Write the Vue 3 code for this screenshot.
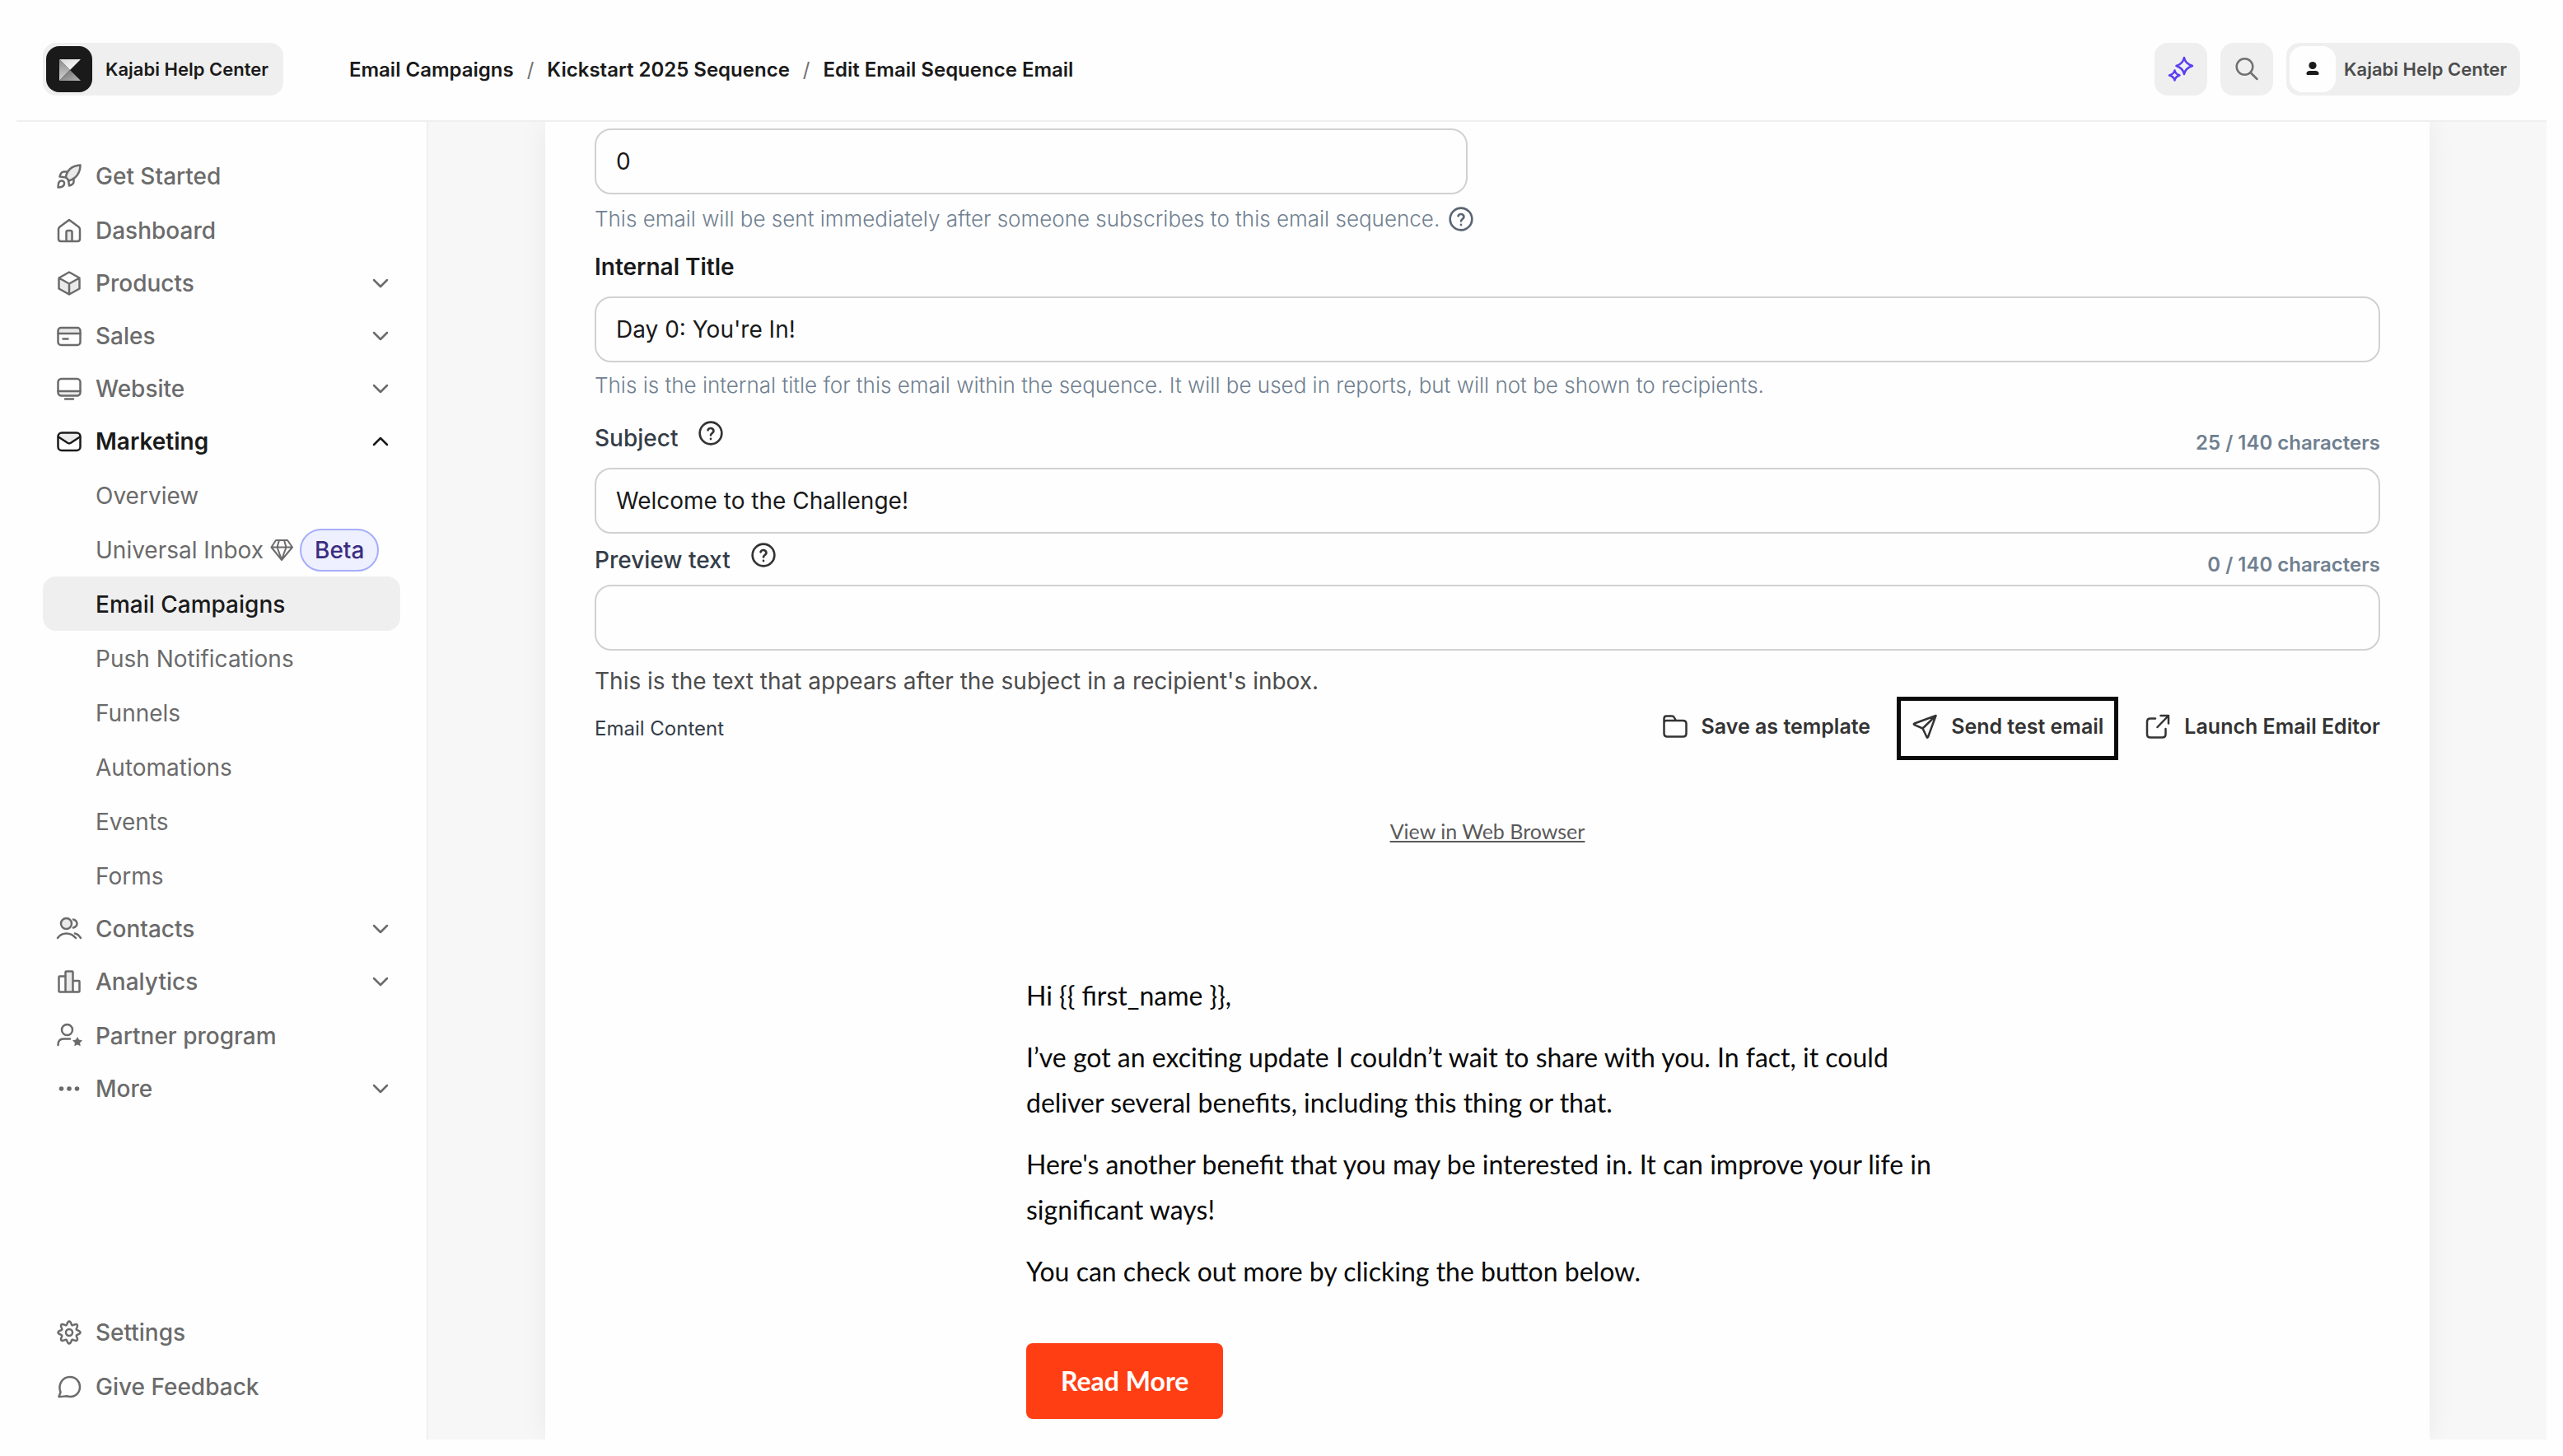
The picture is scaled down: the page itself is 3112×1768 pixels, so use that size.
<template>
  <div class="page">
    <svg class="sprite" aria-hidden="true">
      <symbol id="i-rocket" viewBox="0 0 32 32">
        <path class="tint" d="M12 17C13 9 19 3 29.500 2.500C29.500 12 24 19 15.500 21.500Z" />
        <path d="M12 17C13 9 19 3 29.500 2.500C29.500 12 24 19 15.500 21.500Z" />
        <path d="M13 10.500H9.500C7 10.500 5.500 12.500 4.500 16.500L12 17.500M21.500 18.500V22.500C21.500 25 19.500 26.500 16 27.500L15 20.500" />
        <path d="M2.500 29.500C2.500 25 3.500 21.500 6.500 21.500C9 21.500 10.500 23 10 25.500C9.500 28.500 6.500 29.500 2.500 29.500Z" />
      </symbol>
      <symbol id="i-home" viewBox="0 0 32 32">
        <path class="tint" d="M12.500 29V18C12.500 16.500 13 16 14.500 16H17.500C19 16 19.500 16.500 19.500 18V29Z" />
        <path d="M16 3L27.500 11.500C28.500 12.500 29 13.500 29 14.500V26C29 28 28 29 26 29H6C4 29 3 28 3 26V14.500C3 13.500 3.500 12.500 4.500 11.500ZM12.500 29V18C12.500 16.500 13 16 14.500 16H17.500C19 16 19.500 16.500 19.500 18V29" />
      </symbol>
      <symbol id="i-cube" viewBox="0 0 32 32">
        <path class="tint" d="M3.500 9.500L16 16.500L28.500 9.500V22.500L16 30L3.500 22.500Z" />
        <path d="M16 2.500L28.500 9.500V22.500L16 29.500L3.500 22.500V9.500ZM3.500 9.500L16 16.500L28.500 9.500M16 16.500V29.500" />
      </symbol>
      <symbol id="i-card" viewBox="0 0 32 32">
        <path class="tint" d="M2.500 13V9Q2.500 6 5.500 6H26.500Q29.500 6 29.500 9V13Z" />
        <rect x="2.500" y="6" width="27" height="21" rx="3.500" />
        <path d="M2.500 13H29.500M8.500 19.500H14.500" />
      </symbol>
      <symbol id="i-screen" viewBox="0 0 32 32">
        <path class="tint" d="M2.500 19H29.500V21Q29.500 24.500 26 24.500H6Q2.500 24.500 2.500 21Z" />
        <rect x="2.500" y="4" width="27" height="20.500" rx="4" />
        <path d="M2.500 19H29.500M11 28.500H21" />
      </symbol>
      <symbol id="i-mail" viewBox="0 0 32 32">
        <path class="tint" d="M2.500 10Q3 5.500 7 5.500H25Q29 5.500 29.500 10L18 18Q16 19 14 18Z" />
        <rect x="2.500" y="5.500" width="27" height="21.500" rx="4.500" />
        <path d="M3 10.500L14 17.800Q16 19 18 17.800L29 10.500" />
      </symbol>
      <symbol id="i-people" viewBox="0 0 32 32">
        <circle class="tint" cx="12.500" cy="9.500" r="6.500" />
        <circle cx="12.500" cy="9.500" r="6.500" />
        <path d="M21 4.500C24 5.500 25.500 7.500 25.500 9.500S24 13.500 21 14.500M2 27C7 19.500 18 19.500 24 27M23 21.500C26 22 28 24 30 27" />
      </symbol>
      <symbol id="i-bars" viewBox="0 0 32 32">
        <rect class="tint" x="11.500" y="3.500" width="9" height="25" />
        <path d="M3.500 27.500V10.500Q3.500 9.500 4.500 9.500H11.500V4.500Q11.500 3.500 12.500 3.500H19.500Q20.500 3.500 20.500 4.500V15H27.500Q28.500 15 28.500 16V27.500Q28.500 28.500 27.500 28.500H4.500Q3.500 28.500 3.500 27.500ZM11.500 9.500V28.500M20.500 15V28.500" />
      </symbol>
      <symbol id="i-partner" viewBox="0 0 32 32">
        <circle cx="13.500" cy="8.500" r="6.500" />
        <path d="M2.500 27C2.500 22 5 19.500 9 19.500H17" />
        <path class="solid" d="M26 17L27.900 20.600L32 21.300L29.100 24.200L29.700 28.200L26 26.400L22.300 28.200L22.900 24.200L20 21.300L24.100 20.600Z" />
      </symbol>
      <symbol id="i-dots" viewBox="0 0 32 32">
        <circle class="solid" cx="6.500" cy="16" r="2.800" />
        <circle class="solid" cx="16" cy="16" r="2.800" />
        <circle class="solid" cx="25.500" cy="16" r="2.800" />
      </symbol>
      <symbol id="i-gear" viewBox="0 0 32 32">
        <path :d="gearPath" />
        <circle cx="16" cy="16" r="4" />
      </symbol>
      <symbol id="i-bubble" viewBox="0 0 32 32">
        <path d="M3.500 28L5.500 22.500C2 13 8 4 17 4C24 4 29 9.500 29 16C29 24 22 30 13 27.200C10 27.200 7 28.500 3.500 28Z" />
      </symbol>
      <symbol id="i-chevron" viewBox="0 0 24 24">
        <path d="M4 8L12 16L20 8" />
      </symbol>
      <symbol id="i-gem" viewBox="0 0 28 28">
        <path d="M7 2H21L27 10.500L14 26L1.500 10.500ZM1.500 10.500H27M8.500 10.500L14 25.500L19.500 10.500L17 2M8.500 10.500L11 2" />
      </symbol>
      <symbol id="i-help" viewBox="0 0 24 24">
        <circle cx="12" cy="12" r="10" />
        <path d="M9.400 9.200a2.700 2.700 0 0 1 5.200 .8c0 1.900-2.600 2.100-2.600 3.900M12 17.200v.1" />
      </symbol>
      <symbol id="i-sparkle" viewBox="0 0 32 32">
        <path d="M20 2Q21.500 9.500 30 12Q21.500 14.500 20 22Q18.500 14.500 10.500 12Q18.500 9.500 20 2ZM8.500 17.500Q9.500 22 14.500 23.500Q9.500 25 8.500 29.500Q7.500 25 2 23.500Q7.500 22 8.500 17.500Z" />
      </symbol>
      <symbol id="i-search" viewBox="0 0 32 32">
        <circle cx="13.500" cy="13" r="9.800" />
        <path d="M20.500 20L28.500 28" />
      </symbol>
      <symbol id="i-user" viewBox="0 0 32 32">
        <circle class="solid" cx="16" cy="11.500" r="4.600" />
        <path class="solid" d="M8.500 21.500Q8.500 18 12.500 18H19.500Q23.500 18 23.500 21.500Q23.500 23 22 23H10Q8.500 23 8.500 21.500Z" />
      </symbol>
      <symbol id="i-folder" viewBox="0 0 32 32">
        <path d="M2.500 11.500V6.500Q2.500 3.500 5.500 3.500H12Q14 3.500 15 5.500L17 9H25.500Q29.500 9 29.500 13V24.500Q29.500 28.500 25.500 28.500H6.500Q2.500 28.500 2.500 24.500V11.500Q2.500 9 5.500 9H17" />
      </symbol>
      <symbol id="i-plane" viewBox="0 0 32 32">
        <path d="M29.500 3L3.500 12.500Q2 13.300 3.500 14.200L13.500 18.500L18.500 29Q19.300 30.300 20 29ZM13.500 18.500L29.500 3" />
      </symbol>
      <symbol id="i-launch" viewBox="0 0 32 32">
        <path d="M13 6.500H7Q3 6.500 3 10.500V25.500Q3 29.500 7 29.500H21.500Q25.500 29.500 25.500 25.500V19M19.500 3H29V12.500M28.500 3.500L15.500 17" />
      </symbol>
    </svg>

    <header class="topbar">
      <a href="#" class="brand">
        <svg class="logo" viewBox="0 0 56 56" aria-hidden="true">
          <defs>
            <linearGradient id="g-top" x1="0" y1="0" x2="1" y2="1">
              <stop offset="0" stop-color="#d8d8d8" />
              <stop offset="1" stop-color="#ffffff" />
            </linearGradient>
            <linearGradient id="g-left" x1="0" y1="0" x2="0" y2="1">
              <stop offset="0" stop-color="#8a8a8a" />
              <stop offset="1" stop-color="#d4d4d4" />
            </linearGradient>
            <linearGradient id="g-bottom" x1="0" y1="0" x2="1" y2="1">
              <stop offset="0" stop-color="#6c6c6c" />
              <stop offset="1" stop-color="#b4b4b4" />
            </linearGradient>
          </defs>
          <rect width="56" height="56" rx="16" fill="#1a1a1a" />
          <path fill="url(#g-top)" d="M16 16H42L29 29Z" />
          <path fill="url(#g-left)" d="M16 16L29 29L16 42Z" />
          <path fill="url(#g-bottom)" d="M29 29L42 42H16Z" />
        </svg>
        Kajabi Help Center
      </a>

      <nav class="crumbs" aria-label="Breadcrumb">
        <template v-for="(crumb, i) in crumbs" :key="crumb">
          <span v-if="i" class="slash">/</span>
          <a href="#">{{ crumb }}</a>
        </template>
      </nav>

      <div class="tools">
        <button type="button" class="tool accent" aria-label="Assistant">
          <svg class="icon"><use href="#i-sparkle" /></svg>
        </button>
        <button type="button" class="tool" aria-label="Search">
          <svg class="icon"><use href="#i-search" /></svg>
        </button>
        <button type="button" class="account">
          <span class="avatar"><svg class="icon"><use href="#i-user" /></svg></span>
          Kajabi Help Center
        </button>
      </div>
    </header>

    <div class="body">
      <nav class="sidebar" aria-label="Main">
        <template v-for="item in menu" :key="item.label">
          <button
            v-if="item.group"
            type="button"
            class="item group"
            :class="{ open: item.children }"
            :aria-expanded="!!item.children"
          >
            <svg class="icon"><use :href="'#i-' + item.icon" /></svg>
            {{ item.label }}
            <svg class="chevron"><use href="#i-chevron" /></svg>
          </button>
          <a v-else href="#" class="item" :class="{ first: item.first }">
            <svg class="icon"><use :href="'#i-' + item.icon" /></svg>
            {{ item.label }}
          </a>
          <a
            v-for="child in item.children"
            :key="child.label"
            href="#"
            class="item child"
            :class="{ active: child.label === activePage }"
          >
            {{ child.label }}
            <template v-if="child.beta">
              <svg class="gem"><use href="#i-gem" /></svg>
              <span class="beta">Beta</span>
            </template>
          </a>
        </template>
      </nav>

      <main class="content">
        <form class="card" @submit.prevent>
          <input v-model="form.delay" class="field half" type="text" aria-label="Days after subscription">
          <p class="help delay-help">
            This email will be sent immediately after someone subscribes to this email sequence.
            <svg class="help-icon"><use href="#i-help" /></svg>
          </p>

          <label class="title-label" for="title">Internal Title</label>
          <input id="title" v-model="form.title" class="field" type="text">
          <p class="help">This is the internal title for this email within the sequence. It will be used in reports, but will not be shown to recipients.</p>

          <div class="label-row subject-row">
            <label for="subject">Subject</label>
            <svg class="help-icon"><use href="#i-help" /></svg>
            <span class="counter">{{ form.subject.length }} / 140 characters</span>
          </div>
          <input id="subject" v-model="form.subject" class="field" type="text">

          <div class="label-row">
            <label for="preview">Preview text</label>
            <svg class="help-icon"><use href="#i-help" /></svg>
            <span class="counter">{{ form.preview.length }} / 140 characters</span>
          </div>
          <input id="preview" v-model="form.preview" class="field" type="text">
          <p class="hint">This is the text that appears after the subject in a recipient's inbox.</p>

          <div class="actions">
            <span class="actions-title">Email Content</span>
            <button type="button" class="action">
              <svg class="icon"><use href="#i-folder" /></svg>
              Save as template
            </button>
            <button type="button" class="action outlined">
              <svg class="icon"><use href="#i-plane" /></svg>
              Send test email
            </button>
            <button type="button" class="action">
              <svg class="icon"><use href="#i-launch" /></svg>
              Launch Email Editor
            </button>
          </div>

          <section class="email">
            <a href="#" class="web-link">View in Web Browser</a>
            <div class="email-body">
              <p v-pre>Hi {{ first_name }},</p>
              <p>I’ve got an exciting update I couldn’t wait to share with you. In fact, it could deliver several benefits, including this thing or that.</p>
              <p>Here's another benefit that you may be interested in. It can improve your life in significant ways!</p>
              <p>You can check out more by clicking the button below.</p>
              <a href="#" class="read-more">Read More</a>
            </div>
          </section>
        </form>
      </main>
    </div>
  </div>
</template>

<script setup>
import { ref } from 'vue'

const crumbs = ['Email Campaigns', 'Kickstart 2025 Sequence', 'Edit Email Sequence Email']

const activePage = 'Email Campaigns'

const menu = [
  { label: 'Get Started', icon: 'rocket' },
  { label: 'Dashboard', icon: 'home' },
  { label: 'Products', icon: 'cube', group: true },
  { label: 'Sales', icon: 'card', group: true },
  { label: 'Website', icon: 'screen', group: true },
  {
    label: 'Marketing',
    icon: 'mail',
    group: true,
    children: [
      { label: 'Overview' },
      { label: 'Universal Inbox', beta: true },
      { label: 'Email Campaigns' },
      { label: 'Push Notifications' },
      { label: 'Funnels' },
      { label: 'Automations' },
      { label: 'Events' },
      { label: 'Forms' }
    ]
  },
  { label: 'Contacts', icon: 'people', group: true },
  { label: 'Analytics', icon: 'bars', group: true },
  { label: 'Partner program', icon: 'partner' },
  { label: 'More', icon: 'dots', group: true },
  { label: 'Settings', icon: 'gear', first: true },
  { label: 'Give Feedback', icon: 'bubble' }
]

const form = ref({
  delay: '0',
  title: "Day 0: You're In!",
  subject: 'Welcome to the Challenge!',
  preview: ''
})

// eight rounded teeth around the centre
const points = Array.from({ length: 96 }, (_, i) => {
  const angle = (i / 96) * Math.PI * 2
  const radius = 11.5 + 2 * Math.cos(8 * angle)
  return `${(16 + radius * Math.sin(angle)).toFixed(2)} ${(16 - radius * Math.cos(angle)).toFixed(2)}`
})
const gearPath = `M${points.join('L')}Z`
</script>

<style>
body {
  margin: 0;
  background: #fefefe;
}
</style>

<style scoped>
.page {
  display: flex;
  flex-direction: column;
  box-sizing: border-box;
  min-height: 100vh;
  padding: 20px;
  background: #fefefe;
  color: #1a1a1a;
  font-family: "Inter", sans-serif;
}

.page * {
  box-sizing: border-box;
}

.sprite {
  display: none;
}

a {
  color: inherit;
  text-decoration: none;
}

button {
  border: none;
  background: none;
  color: inherit;
  font-family: inherit;
  cursor: pointer;
}

p {
  margin: 0;
}

svg {
  flex: none;
}

.icon,
.chevron,
.gem,
.help-icon {
  fill: none;
  stroke: currentColor;
  stroke-linecap: round;
  stroke-linejoin: round;
}

.icon {
  width: 32px;
  height: 32px;
  stroke-width: 2.5px;
}

.tint {
  fill: #eaeaea;
  stroke: none;
}

.solid {
  fill: currentColor;
  stroke: none;
}

/* top bar */
.topbar {
  display: flex;
  align-items: center;
  padding: 32px 32px 30px;
  border-bottom: 2px solid #efefef;
}

.brand,
.account {
  display: flex;
  align-items: center;
  height: 64px;
  padding: 4px;
  border-radius: 16px;
  background: #efefef;
  font-size: 22px;
  font-weight: 600;
}

.brand {
  gap: 16px;
  padding-right: 18px;
}

.logo {
  width: 56px;
  height: 56px;
}

.crumbs {
  display: flex;
  gap: 16px;
  margin-left: 80px;
  font-size: 24px;
  font-weight: 600;
}

.slash {
  color: #707070;
  font-weight: 400;
}

.tools {
  display: flex;
  gap: 16px;
  margin-left: auto;
}

.tool {
  display: flex;
  align-items: center;
  justify-content: center;
  width: 64px;
  height: 64px;
  padding: 0;
  border-radius: 16px;
  background: #efefef;
  color: #707070;
}

.accent {
  color: #5a3ff0;
}

.account {
  gap: 10px;
  padding-right: 16px;
  color: #4c4c4c;
}

.avatar {
  display: flex;
  align-items: center;
  justify-content: center;
  width: 56px;
  height: 56px;
  border-radius: 16px;
  background: #fefefe;
  color: #1a1a1a;
}

/* sidebar */
.body {
  display: flex;
  flex: 1;
}

.sidebar {
  display: flex;
  flex: none;
  flex-direction: column;
  width: 500px;
  padding: 32px;
  border-right: 2px solid #efefef;
}

.item {
  display: flex;
  align-items: center;
  gap: 16px;
  height: 66px;
  padding: 2px 12px 0 16px;
  border-radius: 16px;
  color: #6b6b6b;
  font-size: 28px;
  font-weight: 500;
}

.group {
  height: 64px;
  padding-top: 0;
}

.open,
.active {
  color: #1a1a1a;
}

.open {
  font-weight: 600;
}

.first {
  margin-top: auto;
}

.chevron {
  width: 24px;
  height: 24px;
  margin-left: auto;
  stroke-width: 2.5px;
}

.open .chevron {
  transform: rotate(180deg);
}

.child {
  gap: 8px;
  padding-left: 64px;
  font-weight: 400;
}

.active {
  background: #efefef;
  font-weight: 500;
}

.gem {
  width: 28px;
  height: 28px;
  stroke-width: 2px;
}

.beta {
  padding: 0 16px;
  border: 2px solid #a5aefb;
  border-radius: 26px;
  background: #eef0ff;
  color: #3a2d80;
  font-weight: 500;
  line-height: 48px;
}

/* form */
.content {
  flex: 1;
  min-width: 0;
  padding: 0 142px;
  overflow: hidden;
  background: #f7f7f7;
}

.card {
  display: flex;
  flex-direction: column;
  min-height: 100%;
  padding: 8px 60px 24px;
  background: #fefefe;
  box-shadow: 0 0 32px rgba(0, 0, 0, 0.06);
}

.field {
  width: 100%;
  height: 80px;
  padding: 0 24px;
  border: 2px solid #d1d1d1;
  border-radius: 20px;
  background: #fefefe;
  color: #1a1a1a;
  font-family: inherit;
  font-size: 28px;
}

.half {
  width: calc(50% - 24px);
}

.help {
  color: #708090;
  font-size: 26px;
  font-weight: 300;
  line-height: 56px;
}

.delay-help {
  display: flex;
  align-items: center;
  gap: 10px;
  line-height: 60px;
}

.help-icon {
  width: 32px;
  height: 32px;
  color: #333333;
  stroke-width: 2px;
}

.delay-help .help-icon {
  color: #5a6672;
}

.title-label {
  margin-bottom: 8px;
  font-size: 28px;
  font-weight: 600;
  line-height: 56px;
}

.label-row {
  display: flex;
  align-items: center;
  gap: 24px;
  height: 62px;
  color: #343d48;
  font-size: 28px;
  font-weight: 500;
}

.label-row label {
  padding-top: 2px;
}

.label-row .help-icon {
  margin-bottom: 10px;
}

.subject-row {
  margin: 4px 0 6px;
}

.counter {
  margin-top: 12px;
  margin-left: auto;
  color: #708090;
  font-size: 24px;
  font-weight: 600;
}

.hint {
  margin-top: 18px;
  color: #4c4c4c;
  font-size: 28px;
  line-height: 38px;
}

.actions {
  display: flex;
  align-items: center;
  gap: 32px;
  height: 77px;
}

.actions-title {
  margin-right: auto;
  color: #343d48;
  font-size: 24px;
}

.action {
  display: flex;
  align-items: center;
  gap: 16px;
  height: 77px;
  padding: 0 0 6px;
  color: #333333;
  font-size: 25px;
  font-weight: 600;
}

.outlined {
  padding: 0 13px 6px;
  border: 5px solid #0a0a0a;
}

/* email preview */
.email {
  display: flex;
  flex-direction: column;
  align-items: center;
  padding-top: 68px;
  color: #0a0a0a;
  font-family: "Lato", "Noto Sans", sans-serif;
}

.web-link {
  color: #5a5a5a;
  font-size: 25px;
  line-height: 36px;
  text-decoration: underline;
}

.email-body {
  width: 100%;
  max-width: 1120px;
  margin-top: 154px;
  font-size: 32px;
  line-height: 55px;
}

.email-body p {
  margin-bottom: 20px;
}

.read-more {
  display: inline-block;
  margin-top: 40px;
  padding: 0 42px;
  border-radius: 8px;
  background: #ff3e13;
  color: #ffffff;
  font-weight: 700;
  line-height: 92px;
}
</style>
